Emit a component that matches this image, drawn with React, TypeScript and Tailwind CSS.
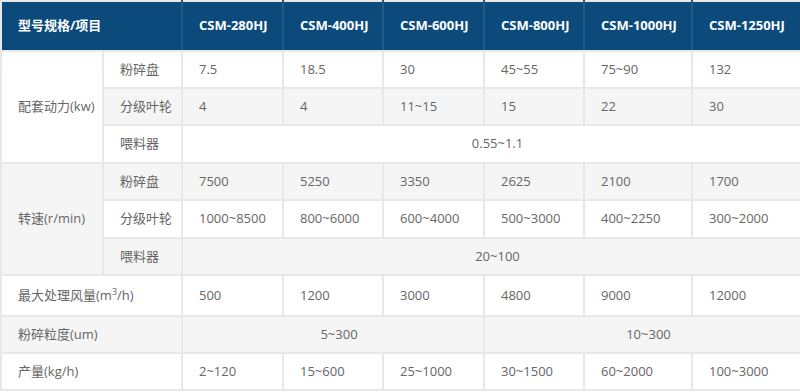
import React from "react";

const models = ["CSM-280HJ", "CSM-400HJ", "CSM-600HJ", "CSM-800HJ", "CSM-1000HJ", "CSM-1250HJ"];

const cell = "border-2 border-[#e8e8e8] pl-4 pr-1 align-middle whitespace-nowrap";
const td = `${cell} text-left`;
const tdc = `${cell} text-center`;

function Cells({ values }: { values: string[] }) {
  return (
    <>
      {values.map((v, i) => (
        <td key={i} className={td}>
          {v}
        </td>
      ))}
    </>
  );
}

export default function App() {
  return (
    <div
      className="w-[800px] h-[392px] overflow-hidden bg-white text-[13px] text-[#666]"
      style={{ fontFamily: '"Open Sans", "Noto Sans CJK SC", sans-serif' }}
    >
      <table className="w-[800px] table-fixed border-collapse">
        <colgroup>
          <col className="w-[102px]" />
          <col className="w-[79px]" />
          <col className="w-[101px]" />
          <col className="w-[100px]" />
          <col className="w-[101px]" />
          <col className="w-[100px]" />
          <col className="w-[108px]" />
          <col className="w-[109px]" />
        </colgroup>
        <thead>
          <tr className="h-[50px] bg-[#0b4a7b] text-white font-bold">
            <th colSpan={2} className="border-2 border-[#e8e8e8] border-r-[#1f5a88] pl-4 pr-1 text-left whitespace-nowrap">
              型号规格/项目
            </th>
            {models.map((m) => (
              <th key={m} className="border-2 border-[#e8e8e8] border-x-[#1f5a88] pl-4 pr-1 text-left whitespace-nowrap">
                {m}
              </th>
            ))}
          </tr>
        </thead>
        <tbody>
          {/* 配套动力 */}
          <tr className="h-[37px] bg-white">
            <td rowSpan={3} className={td}>
              配套动力(kw)
            </td>
            <td className={td}>粉碎盘</td>
            <Cells values={["7.5", "18.5", "30", "45~55", "75~90", "132"]} />
          </tr>
          <tr className="h-[37px] bg-[#f5f5f5]">
            <td className={td}>分级叶轮</td>
            <Cells values={["4", "4", "11~15", "15", "22", "30"]} />
          </tr>
          <tr className="h-[38px] bg-white">
            <td className={td}>喂料器</td>
            <td colSpan={6} className={tdc}>
              0.55~1.1
            </td>
          </tr>

          {/* 转速 */}
          <tr className="h-[37px] bg-[#f5f5f5]">
            <td rowSpan={3} className={td}>
              转速(r/min)
            </td>
            <td className={td}>粉碎盘</td>
            <Cells values={["7500", "5250", "3350", "2625", "2100", "1700"]} />
          </tr>
          <tr className="h-[38px] bg-white">
            <td className={td}>分级叶轮</td>
            <Cells values={["1000~8500", "800~6000", "600~4000", "500~3000", "400~2250", "300~2000"]} />
          </tr>
          <tr className="h-[37px] bg-[#f5f5f5]">
            <td className={td}>喂料器</td>
            <td colSpan={6} className={tdc}>
              20~100
            </td>
          </tr>

          <tr className="h-[41px] bg-white">
            <td colSpan={2} className={td}>
              最大处理风量(m<sup className="text-[9px]">3</sup>/h)
            </td>
            <Cells values={["500", "1200", "3000", "4800", "9000", "12000"]} />
          </tr>
          <tr className="h-[37px] bg-[#f5f5f5]">
            <td colSpan={2} className={td}>
              粉碎粒度(um)
            </td>
            <td colSpan={3} className={tdc}>
              5~300
            </td>
            <td colSpan={3} className={tdc}>
              10~300
            </td>
          </tr>
          <tr className="h-[37px] bg-white">
            <td colSpan={2} className={td}>
              产量(kg/h)
            </td>
            <Cells values={["2~120", "15~600", "25~1000", "30~1500", "60~2000", "100~3000"]} />
          </tr>
        </tbody>
      </table>
    </div>
  );
}
